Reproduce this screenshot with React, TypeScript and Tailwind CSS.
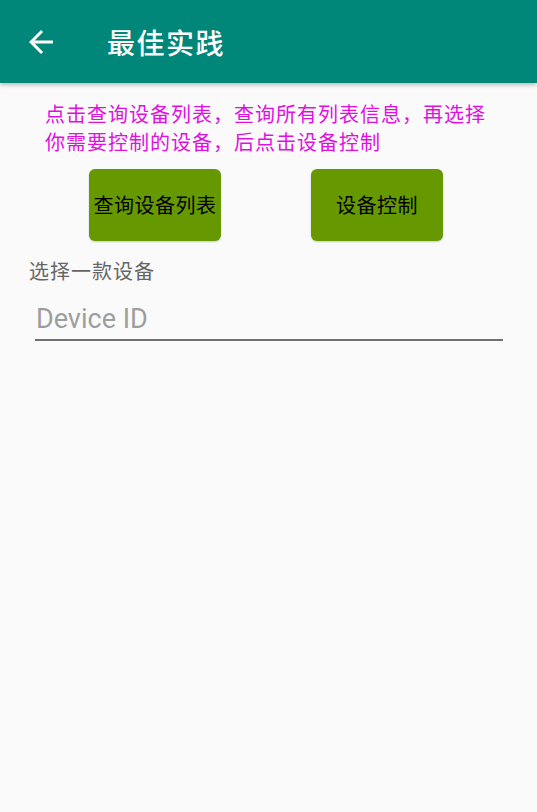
import React from "react";

const font = '"Noto Sans CJK SC", Roboto, "Noto Sans", sans-serif';

export default function App() {
  return (
    <div className="w-[537px] h-[812px] bg-[#fafafa] flex flex-col" style={{ fontFamily: font }}>
      <div className="h-[83px] bg-[#00877a] flex items-center shadow-[0_2px_4px_rgba(0,0,0,0.25)] relative z-10">
        <div className="w-[36px] h-[36px] ml-[23px] flex items-center justify-center">
          <svg width="36" height="36" viewBox="0 0 24 24" fill="#ffffff">
            <path d="M20 11H7.83l5.59-5.59L12 4l-8 8 8 8 1.41-1.41L7.83 13H20v-2z" />
          </svg>
        </div>
        <div className="ml-[48px] text-white text-[28px] font-medium leading-none mt-[1px] tracking-[1.5px]">最佳实践</div>
      </div>
      <div className="pl-[45px] pt-[17px] text-[#e010e0] text-[20px] leading-[28px] tracking-[1px]">
        <div>点击查询设备列表，查询所有列表信息，再选择</div>
        <div>你需要控制的设备，后点击设备控制</div>
      </div>
      <div className="flex mt-[13px] pl-[89px] gap-[90px]">
        <div className="w-[132px] h-[72px] bg-[#669900] rounded-[6px] flex items-center justify-center text-black text-[20px] tracking-[0.5px] shadow-[0_1px_2px_rgba(0,0,0,0.2)]">
          查询设备列表
        </div>
        <div className="w-[132px] h-[72px] bg-[#669900] rounded-[6px] flex items-center justify-center text-black text-[20px] tracking-[0.5px] shadow-[0_1px_2px_rgba(0,0,0,0.2)]">
          设备控制
        </div>
      </div>
      <div className="pl-[29px] mt-[17px] text-[#666666] text-[20px] leading-[26px] tracking-[1px]">选择一款设备</div>
      <div className="ml-[35px] w-[468px] mt-[19px] border-b-2 border-[#707070] pb-[4px]">
        <div className="text-[#9e9e9e] text-[27px] leading-[32px] pl-[1px]" style={{ fontFamily: 'Roboto, "Noto Sans", sans-serif' }}>
          Device ID
        </div>
      </div>
    </div>
  );
}
